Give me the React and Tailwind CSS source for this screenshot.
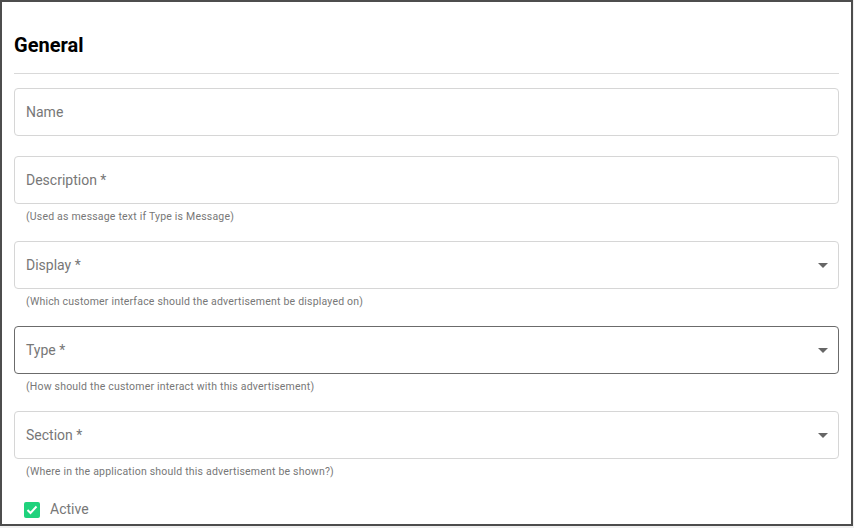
import React from "react";

function Arrow() {
  return (
    <svg width="10" height="5" viewBox="0 0 10 5" className="shrink-0">
      <path d="M0 0 L10 0 L5 5 Z" fill="#666666" />
    </svg>
  );
}

function Field({ label, helper, select, dark }) {
  return (
    <div className="flex flex-col">
      <div
        className={`h-[48px] rounded-[4px] border flex items-center justify-between pl-[11px] pr-[10px] ${
          dark ? "border-[#6b6b6b]" : "border-[#d6d6d6]"
        }`}
      >
        <span className="text-[14px] text-[#777777]">{label}</span>
        {select && <Arrow />}
      </div>
      {helper && (
        <div className="mt-[6px] pl-[12px] h-[11px] leading-[13px] text-[10.5px] tracking-[0.2px] text-[#777777]">
          {helper}
        </div>
      )}
    </div>
  );
}

export default function App() {
  return (
    <div className="w-[854px] h-[528px] bg-[#f0f0f0]" style={{ fontFamily: "Roboto, 'Liberation Sans', sans-serif" }}>
      <div className="w-[853px] h-[526px] border-2 border-[#4d4d4d] bg-white px-[12px] overflow-hidden">
        <div className="pt-[30px] pb-[15px] border-b border-[#d9d9d9]">
          <h1 className="text-[20px] leading-[26px] font-bold text-black">General</h1>
        </div>
        <div className="mt-[14px] flex flex-col gap-[20px]">
          <Field label="Name" />
          <Field label="Description *" helper="(Used as message text if Type is Message)" />
          <Field label="Display *" helper="(Which customer interface should the advertisement be displayed on)" select />
          <Field label="Type *" helper="(How should the customer interact with this advertisement)" select dark />
          <Field label="Section *" helper="(Where in the application should this advertisement be shown?)" select />
        </div>
        <div className="mt-[23px] pl-[10px] flex items-center gap-[10px]">
          <div className="w-[16px] h-[16px] rounded-[2px] bg-[#1fd27c] flex items-center justify-center">
            <svg width="12" height="10" viewBox="0 0 12 10">
              <path d="M1.5 5 L4.5 8 L10.5 1.5" stroke="white" strokeWidth="2" fill="none" />
            </svg>
          </div>
          <span className="text-[14px] text-[#777777]">Active</span>
        </div>
      </div>
    </div>
  );
}
